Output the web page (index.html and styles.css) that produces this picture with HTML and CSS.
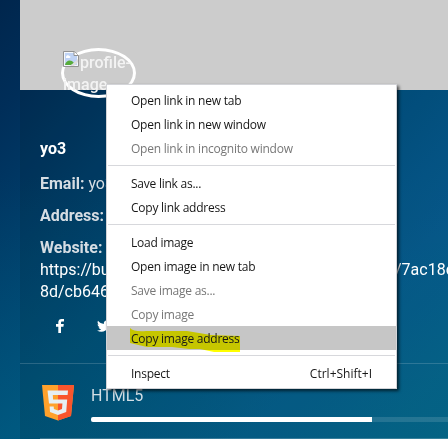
FILE: index.html
```html
<!DOCTYPE html>
<html lang="en">
<head>
<meta charset="utf-8">
<title>Profile</title>
<link rel="stylesheet" href="styles.css">
</head>
<body>
<main class="card">
  <div class="cover">
    <div class="avatar">
      <svg class="broken" viewBox="0 0 16 16"><path d="M.5.5h11l4 4v11H.5z" fill="#f4f7fb" stroke="#929292"/><path d="M2 2h9v3h3v9H2z" fill="#bfd3f5"/><path d="M3 6c0-2 3-2 3-1 2 0 2 2 0 2H3z" fill="#fff"/><path d="M2 14c1-5 6-6 9-2l-3 2z" fill="#57ac3b"/><path d="M11 .5v4h4.500" fill="#fff" stroke="#929292"/><path d="M7 15l8-7v3l-4 4z" fill="#ddd"/></svg><span class="alt">profile-<br>image</span>
    </div>
  </div>
  <section class="info">
    <h1>yo3</h1>
    <p><b>Email:</b> yo3</p>
    <p><b>Address:</b></p>
    <p><b>Website:</b></p>
    <div class="url"><span>https://bu</span><span>/7ac18d</span></div>
    <div class="url">8d/cb646</div>
    <div class="social">
      <svg class="facebook" viewBox="0 0 8 14"><path d="M2.300 14V7.700H0V5h2.300V3.300C2.300 1.200 3.600 0 5.600 0H8v2.500H6.500C5.300 2.500 5 3 5 3.700V5h2.800l-.4 2.700H5V14z"/></svg>
      <svg class="twitter" viewBox="0 0 24 24"><path d="M24 4.600c-.9.400-1.800.7-2.800.8 1-.6 1.800-1.600 2.200-2.700-1 .6-2 1-3.100 1.200A4.900 4.900 0 0 0 11.900 8.400C7.700 8.200 4.100 6.200 1.700 3.100.4 5.300 1 8.200 3.200 9.700c-.8 0-1.600-.2-2.200-.6 0 2.300 1.600 4.400 3.900 4.900-.7.200-1.500.2-2.200.1.600 2 2.400 3.400 4.600 3.400A9.900 9.900 0 0 1 0 19.500 14 14 0 0 0 21.500 7.100c1-.7 1.800-1.600 2.500-2.500z"/></svg>
    </div>
  </section>
  <section class="skill">
    <svg class="html5" viewBox="0 0 32 36"><path d="M0 0h32l-3 31-13 4.500L3 31z" fill="#ffa12b"/><path d="M16 0h16l-3 31-13 4.500z" fill="#f9552d"/><path d="M5.500 5.500h20.500l-.4 4.500H10.800l.3 4.500h14.100L24.200 27 16 30l-8-3-.4-5.500h4.100l.2 2.500 4.100 1.500 4-1.500.4-5.500H7z" fill="#e6eff3"/></svg>
    <div class="detail"><div class="label">HTML5</div><div class="track"><div class="fill"></div></div></div>
  </section>
  <div class="next"></div>
</main>
<nav class="menu">
  <div class="item">Open link in new tab</div>
  <div class="item">Open link in new window</div>
  <div class="item off">Open link in incognito window</div>
  <hr>
  <div class="item">Save link as...</div>
  <div class="item">Copy link address</div>
  <hr>
  <div class="item">Load image</div>
  <div class="item">Open image in new tab</div>
  <div class="item off">Save image as...</div>
  <div class="item off">Copy image</div>
  <div class="item active"><svg class="marker" viewBox="0 0 112 26"><path d="M1 1Q5 5 17 4H58L70 6 82 8 111 9V25H85L71 22H60L43 20 18 20 1 16z"/></svg><span>Copy image address</span></div>
  <hr>
  <div class="item"><span>Inspect</span><span class="keys">Ctrl+Shift+I</span></div>
</nav>
</body>
</html>
```
FILE: styles.css
```css
* { box-sizing: border-box; }
body {
  margin: 0;
  height: 439px;
  overflow: hidden;
  position: relative;
  background:
    linear-gradient(180deg, rgba(0, 110, 125, 0) 40%, rgba(0, 110, 125, .28) 100%),
    linear-gradient(133deg, #00264d 0%, #002e59 12%, #005080 48%, #07609a 76%, #07709e 100%);
  font: 16px/22px Roboto, sans-serif;
  color: #fff;
}
.card { margin-left: 20px; height: 439px; background: rgba(0, 20, 25, .13); }
.cover { height: 90px; padding: 48px 0 0 41px; background: #ccc; }
.avatar {
  position: relative;
  display: flex;
  width: 75px;
  height: 50px;
  border: 3px solid #fff;
  border-radius: 50%;
}
.broken { position: absolute; left: -1px; top: 0; width: 16px; height: 16px; }
.alt { margin: 1px -5px 0 -1px; text-indent: 17px; font-weight: 500; color: #f3f3f3; white-space: nowrap; }
.info { height: 274px; padding: 48px 0 0 20px; border-bottom: 1px solid rgba(255, 255, 255, .16); }
h1 { margin: 0 0 13px; font-size: 16px; line-height: 22px; }
p { margin: 0 0 10px; color: #d6dde3; }
p:nth-of-type(3) { margin: 0; }
.url { display: flex; height: 22px; white-space: nowrap; }
.url span:first-child { width: 355px; flex: none; }
.social { display: flex; align-items: center; gap: 33px; padding: 16px 0 0 16px; fill: #fff; }
.facebook { width: 8px; height: 14px; }
.twitter { width: 14px; height: 14px; }
.skill { display: flex; height: 74px; padding: 21px 0 0 22px; }
.html5 { width: 32px; height: 36px; flex: none; }
.detail { flex: 1; padding-left: 17px; }
.label { height: 32px; color: #d3dfe6; }
.track { height: 5px; border-radius: 2px 0 0 2px; background: rgba(255, 255, 255, .13); }
.fill { width: 281px; height: 5px; border-radius: 2px 0 0 2px; background: #fff; }
.next { height: 1px; margin-left: 20px; background: rgba(255, 255, 255, .2); }
.menu {
  position: absolute;
  left: 106px;
  top: 84px;
  width: 291px;
  height: 305px;
  padding: 3px 0;
  border: 1px solid #d3d4d8;
  background: #fff;
  box-shadow: 2px 2px 3px rgba(0, 0, 0, .65);
  color: #171717;
  font: 12px/24px "Open Sans", sans-serif;
  letter-spacing: -.24px;
}
.item {
  position: relative;
  display: flex;
  justify-content: space-between;
  height: 24px;
  padding: 1px 24px 0;
  white-space: nowrap;
}
.keys { letter-spacing: 0; }
.off { color: #777; }
.active { background: #c6c6c6; }
.active span { position: relative; }
.marker { position: absolute; left: 22px; top: 1px; width: 112px; height: 26px; fill: #ff0; mix-blend-mode: multiply; }
hr { height: 1px; margin: 5px 1px; border: 0; background: #d7d8dc; }
```
